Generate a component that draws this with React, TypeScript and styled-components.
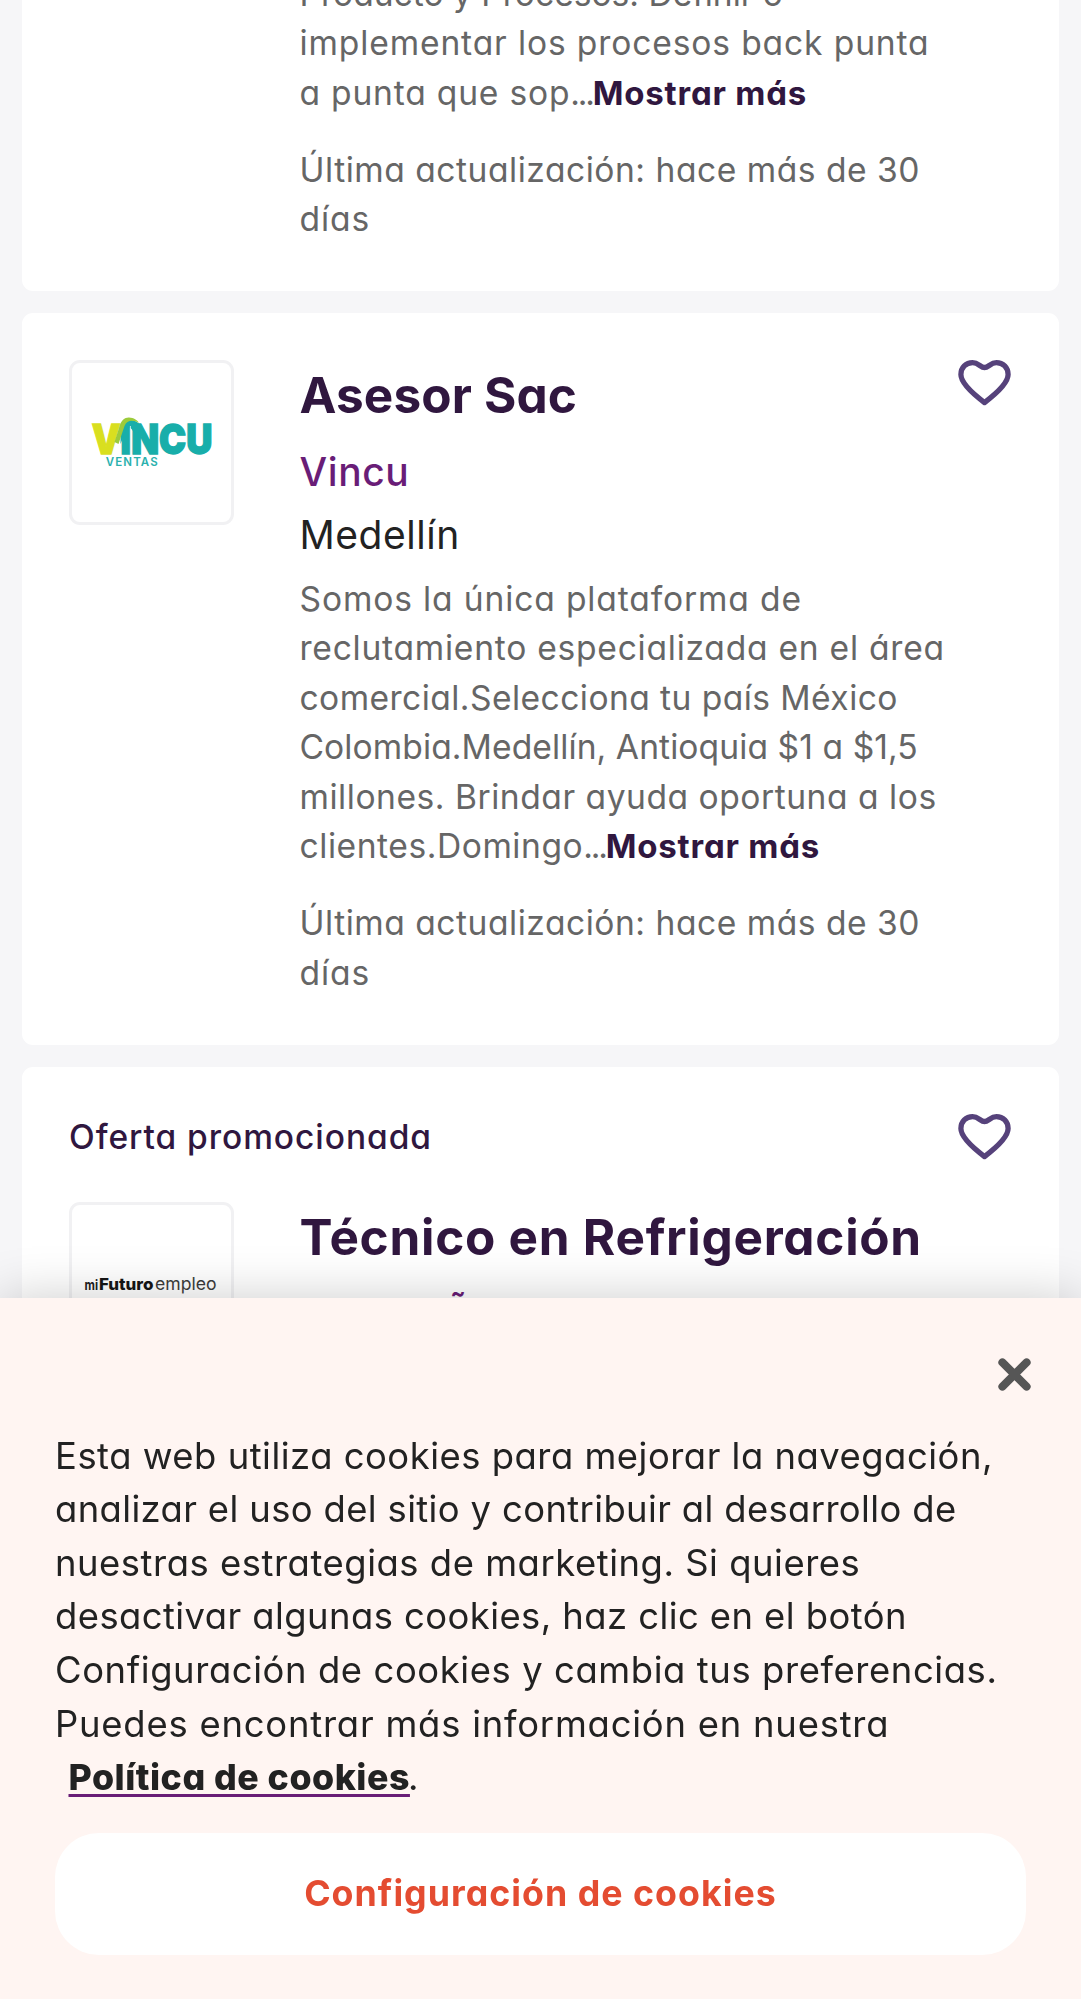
import React from "react";
import styled, { createGlobalStyle } from "styled-components";

const GlobalStyle = createGlobalStyle`
  html, body { margin: 0; height: 1999px; overflow: hidden; background: #f6f6f8; }
  *, *::before, *::after { box-sizing: border-box; }
  body {
    font-family: Inter, "Noto Sans", sans-serif;
    font-feature-settings: "cv11";
    color: #222;
  }
  button { font: inherit; font-feature-settings: inherit; border: 0; padding: 0; background: none; cursor: pointer; }
`;

const Feed = styled.main`
  display: flex;
  flex-direction: column;
  gap: 22px;
  height: 1999px;
  overflow: hidden;
  padding: 0 22px;
`;

const Card = styled.article<{ $scrolled?: boolean }>`
  flex: none;
  background: #fff;
  border-radius: 11px;
  padding: 47px 48px 47.5px 47px;
  margin-top: ${(p) => (p.$scrolled ? "-78.5px" : "0")};
`;

const CardRow = styled.div`
  display: flex;
  align-items: flex-start;
`;

const PromoRow = styled.div`
  display: flex;
  justify-content: space-between;
  align-items: flex-start;
  height: 47px;
  margin-bottom: 41px;
`;

const PromoLabel = styled.span`
  font-size: 33.5px;
  font-weight: 500;
  line-height: 47px;
  letter-spacing: 0.95px;
  color: #30173f;
`;

const LogoSlot = styled.div`
  flex: none;
  width: 165px;
  margin-right: 65.5px;
`;

const LogoFrame = styled.div`
  width: 165px;
  height: 165px;
  border: 3px solid #f1f1f3;
  border-radius: 11px;
  overflow: hidden;
  background: #fff;
  svg { display: block; margin: -3px; }
`;

const Body = styled.div`
  flex: 1;
  min-width: 0;
  white-space: nowrap;
`;

const Title = styled.h2<{ $track: number; $gap?: number }>`
  margin: 0 0 ${(p) => p.$gap ?? 12.5}px;
  font-size: 49.5px;
  font-weight: 700;
  line-height: 70px;
  letter-spacing: ${(p) => p.$track}px;
  color: #30173f;
`;

const Company = styled.div`
  margin-bottom: 5.5px;
  font-size: 39px;
  font-weight: 500;
  line-height: 57.75px;
  letter-spacing: 0.6px;
  color: #691d77;
`;

const Place = styled.div`
  margin-bottom: 10px;
  font-size: 39px;
  line-height: 57.75px;
  letter-spacing: 0.55px;
`;

const Paragraph = styled.p`
  margin: 0 0 27.5px;
  font-size: 33.6px;
  line-height: 49.5px;
  color: #666;
  &:last-child { margin-bottom: 0; }
`;

const Line = styled.span<{ $track: number }>`
  display: block;
  letter-spacing: ${(p) => p.$track}px;
`;

const Dots = styled.span`
  letter-spacing: -2.2px;
`;

const More = styled.button`
  font-size: 33px;
  font-weight: 700;
  letter-spacing: 0.8px;
  line-height: 1;
  color: #30173f;
`;

const LikeButton = styled.button`
  flex: none;
  display: block;
  width: 53px;
  height: 46px;
  svg { display: block; }
`;

const Banner = styled.section`
  position: fixed;
  left: 0;
  right: 0;
  bottom: 0;
  height: 701px;
  padding: 60px 50px 44px 55px;
  background: #fff5f2;
  box-shadow: 0 0 49.5px rgba(0, 0, 0, 0.2);
`;

const CloseRow = styled.div`
  display: flex;
  justify-content: flex-end;
  height: 71.6px;
`;

const CloseButton = styled.button`
  width: 33px;
  height: 33px;
  svg { display: block; }
`;

const Notice = styled.p`
  margin: 0 0 28px;
  font-size: 36.4px;
  line-height: 53.6px;
  white-space: nowrap;
`;

const PolicyLink = styled.a`
  margin: 0 -2px 0 13.5px;
  font-size: 35.75px;
  font-weight: 800;
  letter-spacing: 0.5px;
  text-decoration: underline;
  text-decoration-color: #691d77;
  text-decoration-thickness: 2.75px;
  text-underline-offset: 3.5px;
  text-decoration-skip-ink: none;
`;

const SettingsButton = styled.button`
  display: block;
  width: 971px;
  height: 122px;
  padding-bottom: 2px;
  border-radius: 44px;
  background: #fff;
  color: #e44c31;
  font-size: 35.75px;
  font-weight: 700;
  letter-spacing: 1.02px;
`;

const Heart = () => (
  <LikeButton aria-label="Guardar oferta">
    <svg width="53" height="46" viewBox="0 0 53 46" fill="none" stroke="#56427b" strokeWidth="5.3" strokeLinejoin="round">
      <path d="M26.5 42.6C17.5 35.8 2.9 23.8 2.9 14.6C2.9 7.5 8 2.7 14.6 2.7C20.4 2.7 22.6 7.5 26.5 7.5C30.4 7.5 32.6 2.7 38.4 2.7C45 2.7 50.1 7.5 50.1 14.6C50.1 23.8 35.5 35.8 26.5 42.6Z" />
    </svg>
  </LikeButton>
);

const VincuLogo = () => (
  <svg width="165" height="165" viewBox="0 0 165 165">
    <text
      x="22.8"
      y="94"
      fontFamily="Inter, sans-serif"
      fontWeight="900"
      fontSize="41"
      textLength="120.5"
      lengthAdjust="spacingAndGlyphs"
      fill="#18aeaa"
      stroke="#18aeaa"
      strokeWidth="1.4"
    >
      <tspan fill="#d9df1f" stroke="#d9df1f">V</tspan>INCU
    </text>
    <path d="M51.5 84V70C53 63 57 59.5 62 60C68 60.5 71 64 75 71L65 73C62 67 59 66 57 70Z" fill="#18aeaa" />
    <path d="M45.5 82L50 68C52 60 56 57.4 60 57.6C65 57.8 68 60 70 63C64 59.5 58 60 55.5 66L49.5 84Z" fill="#9ccb3b" />
    <path d="M61.4 66V94" stroke="#d5f0ee" strokeWidth="0.9" />
    <text x="36.7" y="106.3" fontFamily="Inter, sans-serif" fontWeight="600" fontSize="11.5" textLength="52" fill="#2ab1ae">VENTAS</text>
  </svg>
);

const FuturoLogo = () => (
  <svg width="165" height="165" viewBox="0 0 165 165" fontFamily="Inter, sans-serif">
    <text x="15.5" y="88" fontWeight="700" fontSize="13.5" textLength="13.5" lengthAdjust="spacingAndGlyphs" fill="#222">mi</text>
    <text x="30" y="88" fontWeight="800" fontSize="16.5" textLength="54.5" lengthAdjust="spacingAndGlyphs" fill="#161616">Futuro</text>
    <text x="86" y="88" fontWeight="400" fontSize="17.5" textLength="61.5" lengthAdjust="spacingAndGlyphs" fill="#3c3c3c">empleo</text>
  </svg>
);

type TextLine = [text: string, track: number];

const updated: TextLine[] = [
  ["Última actualización: hace más de 30", 0.52],
  ["días", 0.9],
];

const Description = ({ lines }: { lines: TextLine[] }) => (
  <Paragraph>
    {lines.map(([text, track], i) => (
      <Line key={text} $track={track}>
        {text}
        {i === lines.length - 1 && (
          <>
            <Dots>...</Dots>
            <More>Mostrar más</More>
          </>
        )}
      </Line>
    ))}
  </Paragraph>
);

const Updated = () => (
  <Paragraph>
    {updated.map(([text, track]) => (
      <Line key={text} $track={track}>{text}</Line>
    ))}
  </Paragraph>
);

const notice: TextLine[] = [
  ["Esta web utiliza cookies para mejorar la navegación,", 0.515],
  ["analizar el uso del sitio y contribuir al desarrollo de", 0.375],
  ["nuestras estrategias de marketing. Si quieres", 0.54],
  ["desactivar algunas cookies, haz clic en el botón", 0.44],
  ["Configuración de cookies y cambia tus preferencias.", 0.6],
  ["Puedes encontrar más información en nuestra", 0.79],
];

export default function App() {
  return (
    <>
      <GlobalStyle />
      <Feed>
        <Card $scrolled>
          <CardRow>
            <LogoSlot />
            <Body>
              <Description
                lines={[
                  ["Producto y Procesos. Definir o", 0.0],
                  ["implementar los procesos back punta", 0.87],
                  ["a punta que sop", 0.8],
                ]}
              />
              <Updated />
            </Body>
          </CardRow>
        </Card>

        <Card>
          <CardRow>
            <LogoSlot>
              <LogoFrame><VincuLogo /></LogoFrame>
            </LogoSlot>
            <Body>
              <Title $track={0.12}>Asesor Sac</Title>
              <Company>Vincu</Company>
              <Place>Medellín</Place>
              <Description
                lines={[
                  ["Somos la única plataforma de", 0.86],
                  ["reclutamiento especializada en el área", 0.75],
                  ["comercial.Selecciona tu país México", 0.44],
                  ["Colombia.Medellín, Antioquia $1 a $1,5", 0.09],
                  ["millones. Brindar ayuda oportuna a los", 0.53],
                  ["clientes.Domingo", 0.55],
                ]}
              />
              <Updated />
            </Body>
            <Heart />
          </CardRow>
        </Card>

        <Card>
          <PromoRow>
            <PromoLabel>Oferta promocionada</PromoLabel>
            <Heart />
          </PromoRow>
          <CardRow>
            <LogoSlot>
              <LogoFrame><FuturoLogo /></LogoFrame>
            </LogoSlot>
            <Body>
              <Title $track={0.73} $gap={14}>Técnico en Refrigeración</Title>
              <Company>CAMPAÑA</Company>
            </Body>
          </CardRow>
        </Card>
      </Feed>

      <Banner>
        <CloseRow>
          <CloseButton aria-label="Cerrar">
            <svg width="33" height="33" viewBox="0 0 33 33" stroke="#565656" strokeWidth="8" strokeLinecap="round">
              <path d="M4.4 4.4L28.6 28.6M28.6 4.4L4.4 28.6" />
            </svg>
          </CloseButton>
        </CloseRow>
        <Notice>
          {notice.map(([text, track]) => (
            <Line key={text} $track={track}>{text}</Line>
          ))}
          <PolicyLink>Política de cookies</PolicyLink>.
        </Notice>
        <SettingsButton>Configuración de cookies</SettingsButton>
      </Banner>
    </>
  );
}
